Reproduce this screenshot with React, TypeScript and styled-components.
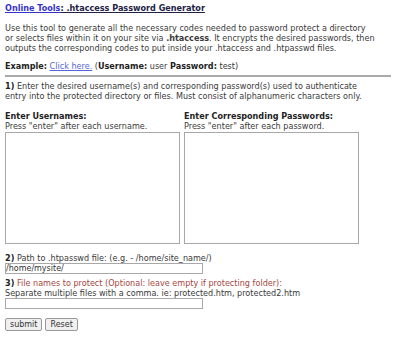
import styled, { createGlobalStyle } from "styled-components";

const GlobalStyle = createGlobalStyle`
  body {
    margin: 0;
    background: #ffffff;
    font-family: "DejaVu Sans", Verdana, sans-serif;
    font-size: 8.1px;
    color: #3a3a3a;
  }
`;

const Page = styled.div`
  padding: 3px 0 0 5px;
  width: 386px;
  line-height: 10px;
`;

const Title = styled.div`
  font-weight: 700;
  color: #222244;
  text-decoration: underline;
`;

const TitleLink = styled.a`
  color: #3333cc;
`;

const Para = styled.p<{ $gap?: number }>`
  margin: ${(p) => p.$gap ?? 10}px 0 0 0;
`;

const Link = styled.a`
  color: #5566dd;
  text-decoration: underline;
`;

const Rule = styled.hr`
  margin: 4px 0 0 0;
  border: none;
  border-top: 2px solid #aaaaaa;
`;

const Columns = styled.div`
  display: grid;
  grid-template-columns: 179px 179px;
  margin-top: 10px;
`;

const Column = styled.div`
  display: flex;
  flex-direction: column;
`;

const Label = styled.b`
  color: #222222;
`;

const Area = styled.textarea`
  margin-top: 1px;
  width: 175px;
  height: 112px;
  box-sizing: border-box;
  border: 1px solid #a8a8a8;
  resize: none;
  padding: 0;
`;

const Field = styled.input`
  display: block;
  width: 198px;
  height: 11px;
  box-sizing: border-box;
  border: 1px solid #a8a8a8;
  padding: 0;
  font-family: "DejaVu Sans", Verdana, sans-serif;
  font-size: 8px;
  color: #333333;
`;

const Step = styled.div<{ $warn?: boolean }>`
  color: ${(p) => (p.$warn ? "#a5473f" : "#3a3a3a")};
  b {
    color: #222222;
  }
`;

const Block = styled.div<{ $top: number }>`
  margin-top: ${(p) => p.$top}px;
`;

const Buttons = styled.div`
  display: flex;
  gap: 3px;
  margin-top: 9px;
`;

const Button = styled.button`
  font-family: "DejaVu Sans", Verdana, sans-serif;
  font-size: 8px;
  color: #333333;
  background: #f0f0f0;
  border: 1px solid #999999;
  border-radius: 2px;
  height: 13px;
  padding: 0 4px;
`;

export default function App() {
  return (
    <Page>
      <GlobalStyle />
      <Title>
        <TitleLink href="#">Online Tools</TitleLink>: .htaccess Password Generator
      </Title>
      <Para $gap={10}>
        Use this tool to generate all the necessary codes needed to password protect a directory
        <br />
        or selects files within it on your site via <b>.htaccess</b>. It encrypts the desired
        passwords, then
        <br />
        outputs the corresponding codes to put inside your .htaccess and .htpasswd files.
      </Para>
      <Para $gap={8}>
        <Label>Example:</Label> <Link href="#">Click here.</Link> (<Label>Username:</Label> user{" "}
        <Label>Password:</Label> test)
      </Para>
      <Rule />
      <Para $gap={4}>
        <Label>1)</Label> Enter the desired username(s) and corresponding password(s) used to
        authenticate
        <br />
        entry into the protected directory or files. Must consist of alphanumeric characters only.
      </Para>
      <Columns>
        <Column>
          <Label>Enter Usernames:</Label>
          <span>Press "enter" after each username.</span>
          <Area />
        </Column>
        <Column>
          <Label>Enter Corresponding Passwords:</Label>
          <span>Press "enter" after each password.</span>
          <Area />
        </Column>
      </Columns>
      <Block $top={9}>
        <Step>
          <b>2)</b> Path to .htpasswd file: (e.g. - /home/site_name/)
        </Step>
        <Field defaultValue="/home/mysite/" />
      </Block>
      <Block $top={4}>
        <Step $warn>
          <b>3)</b> File names to protect (Optional: leave empty if protecting folder):
        </Step>
        <Step>Separate multiple files with a comma. ie: protected.htm, protected2.htm</Step>
        <Field />
      </Block>
      <Buttons>
        <Button>submit</Button>
        <Button>Reset</Button>
      </Buttons>
    </Page>
  );
}
